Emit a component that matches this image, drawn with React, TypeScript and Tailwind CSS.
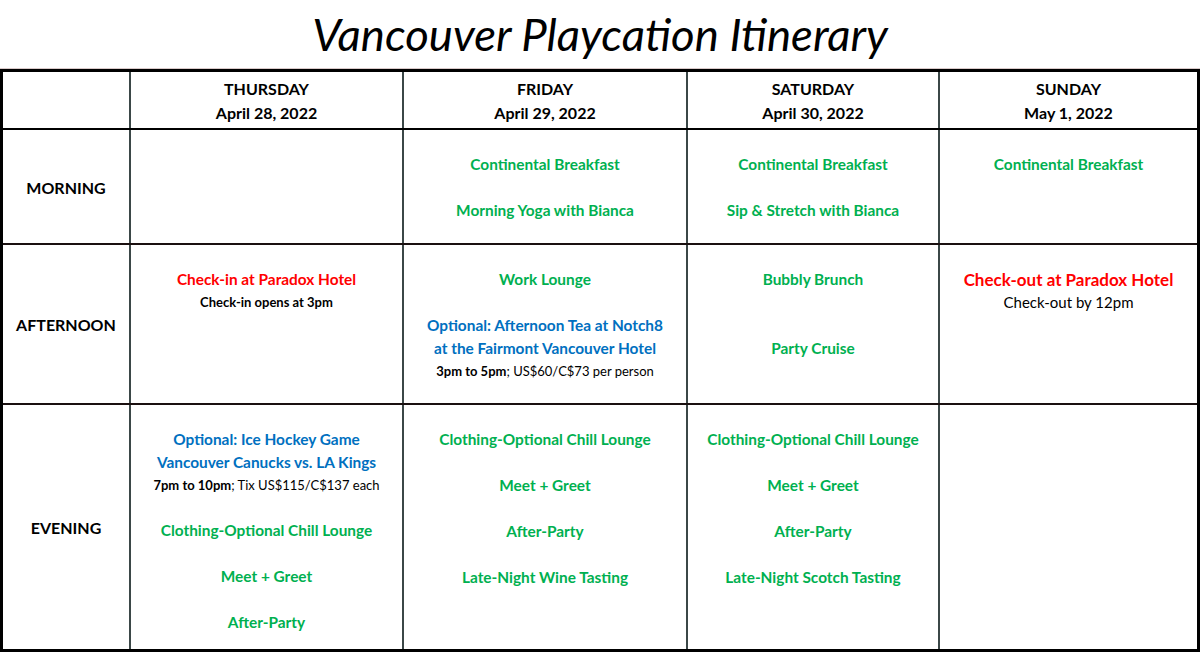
type Line = { text: string; color?: string; small?: boolean; extra?: string; big?: boolean; regular?: boolean; blank?: boolean; bold?: string };

const G = 'text-[#00b050]';
const B = 'text-[#0070c0]';
const R = 'text-[#ff0000]';

const blank: Line = { text: '', blank: true };

const days = [
  { day: 'THURSDAY', date: 'April 28, 2022' },
  { day: 'FRIDAY', date: 'April 29, 2022' },
  { day: 'SATURDAY', date: 'April 30, 2022' },
  { day: 'SUNDAY', date: 'May 1, 2022' },
];

const rows: { label: string; h: string; cells: Line[][] }[] = [
  {
    label: 'MORNING',
    h: 'h-[115px]',
    cells: [
      [],
      [{ text: 'Continental Breakfast', color: G }, blank, { text: 'Morning Yoga with Bianca', color: G }],
      [{ text: 'Continental Breakfast', color: G }, blank, { text: 'Sip & Stretch with Bianca', color: G }],
      [{ text: 'Continental Breakfast', color: G }],
    ],
  },
  {
    label: 'AFTERNOON',
    h: 'h-[160px]',
    cells: [
      [{ text: 'Check-in at Paradox Hotel', color: R }, { text: 'Check-in opens at 3pm', small: true, bold: 'Check-in opens at 3pm' }],
      [
        { text: 'Work Lounge', color: G },
        blank,
        { text: 'Optional: Afternoon Tea at Notch8', color: B },
        { text: 'at the Fairmont Vancouver Hotel', color: B },
        { text: '', small: true, bold: '3pm to 5pm', extra: '; US$60/C$73 per person' },
      ],
      [{ text: 'Bubbly Brunch', color: G }, blank, blank, { text: 'Party Cruise', color: G }],
      [{ text: 'Check-out at Paradox Hotel', color: R, big: true }, { text: 'Check-out by 12pm', regular: true }],
    ],
  },
  {
    label: 'EVENING',
    h: 'flex-1',
    cells: [
      [
        { text: 'Optional: Ice Hockey Game', color: B },
        { text: 'Vancouver Canucks vs. LA Kings', color: B },
        { text: '', small: true, bold: '7pm to 10pm', extra: '; Tix US$115/C$137 each' },
        blank,
        { text: 'Clothing-Optional Chill Lounge', color: G },
        blank,
        { text: 'Meet + Greet', color: G },
        blank,
        { text: 'After-Party', color: G },
      ],
      [
        { text: 'Clothing-Optional Chill Lounge', color: G },
        blank,
        { text: 'Meet + Greet', color: G },
        blank,
        { text: 'After-Party', color: G },
        blank,
        { text: 'Late-Night Wine Tasting', color: G },
      ],
      [
        { text: 'Clothing-Optional Chill Lounge', color: G },
        blank,
        { text: 'Meet + Greet', color: G },
        blank,
        { text: 'After-Party', color: G },
        blank,
        { text: 'Late-Night Scotch Tasting', color: G },
      ],
      [],
    ],
  },
];

const colW = ['w-[128px]', 'w-[273px]', 'w-[284px]', 'w-[252px]', 'flex-1'];

function CellLine({ line }: { line: Line }) {
  if (line.blank) return <div className="h-[23px]" />;
  if (line.small) {
    return (
      <div className="h-[22px] leading-[22px] text-[13px] text-black">
        <span className="font-bold">{line.bold}</span>
        {line.extra}
      </div>
    );
  }
  if (line.big) {
    return <div className={`h-[23px] leading-[23px] text-[17px] font-bold ${line.color}`}>{line.text}</div>;
  }
  if (line.regular) {
    return <div className="h-[23px] leading-[23px] text-[15px] text-black">{line.text}</div>;
  }
  return <div className={`h-[23px] leading-[23px] text-[15.4px] font-bold ${line.color}`}>{line.text}</div>;
}

export default function App() {
  return (
    <div className="w-[1200px] h-[652px] bg-white font-['Lato',sans-serif] text-black overflow-hidden">
      <div className="h-[69px] flex items-center justify-center border-b border-[#d9c9c9]">
        <h1 className="text-[45.5px] italic leading-none pb-[1px]">Vancouver Playcation Itinerary</h1>
      </div>
      <div className="border-[3px] border-black h-[583px] flex flex-col">
        <div className="flex h-[58px] border-b-2 border-black">
          <div className={`${colW[0]} border-r-2 border-[#3b4747]`} />
          {days.map((d, i) => (
            <div
              key={d.day}
              className={`${colW[i + 1]} ${i < 3 ? 'border-r-2 border-[#3b4747]' : ''} flex flex-col items-center justify-center pt-[2px] font-bold text-[16px]`}
            >
              <div className="h-[24px] leading-[24px]">{d.day}</div>
              <div className="h-[24px] leading-[24px]">{d.date}</div>
            </div>
          ))}
        </div>
        {rows.map((row, ri) => (
          <div
            key={row.label}
            className={`flex ${row.h} ${ri < 2 ? 'border-b-2 border-[#1a1010]' : ''}`}
          >
            <div className={`${colW[0]} border-r-2 border-[#3b4747] flex items-center justify-center font-bold text-[16px] pt-[2px]`}>
              {row.label}
            </div>
            {row.cells.map((cell, ci) => (
              <div
                key={ci}
                className={`${colW[ci + 1]} ${ci < 3 ? 'border-r-2 border-[#3b4747]' : ''} flex flex-col items-center pt-[23px] text-center`}
              >
                {cell.map((line, li) => (
                  <CellLine key={li} line={line} />
                ))}
              </div>
            ))}
          </div>
        ))}
      </div>
    </div>
  );
}
